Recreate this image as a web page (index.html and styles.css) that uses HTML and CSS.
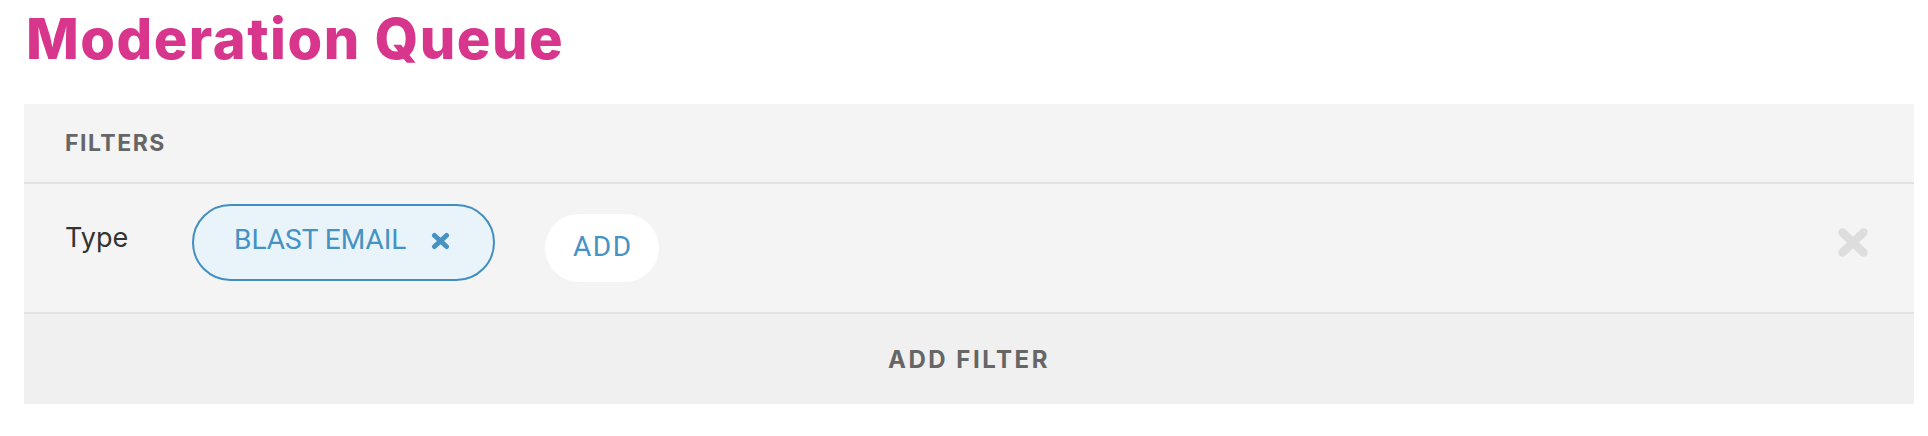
FILE: index.html
```html
<!DOCTYPE html>
<html lang="en">
<head>
<meta charset="utf-8">
<title>Moderation Queue</title>
<link rel="stylesheet" href="styles.css">
</head>
<body>
  <h1 class="page-title">Moderation Queue</h1>
  <section class="filters">
    <header class="filters-header">FILTERS</header>
    <div class="filter-row">
      <div class="filter-label">Type</div>
      <div class="chip">
        <span class="chip-text">BLAST EMAIL</span>
        <svg class="chip-x" viewBox="0 0 19 18" aria-hidden="true">
          <path d="M3.5 3.5 L15.5 14.5 M15.5 3.5 L3.5 14.5" stroke="currentColor" stroke-width="5" stroke-linecap="round" fill="none"/>
        </svg>
      </div>
      <button class="add-btn">ADD</button>
      <button class="remove-btn" aria-label="Remove filter">
        <svg viewBox="0 0 32 31" aria-hidden="true">
          <path d="M5.5 5.5 L26.5 25.5 M26.5 5.5 L5.5 25.5" stroke="currentColor" stroke-width="8.5" stroke-linecap="round" fill="none"/>
        </svg>
      </button>
    </div>
    <div class="add-filter">ADD FILTER</div>
  </section>
</body>
</html>
```

FILE: styles.css
```css
* { box-sizing: border-box; }

body {
  margin: 0;
  padding: 0 14px 0 24px;
  background: #ffffff;
  font-family: Inter, "Noto Sans", sans-serif;
}

.page-title {
  margin: 11px 0 37px 2px;
  font-family: Inter, sans-serif;
  font-weight: 800;
  font-size: 56px;
  line-height: 56px;
  letter-spacing: 1.5px;
  color: #d8358c;
}

.filters {
  display: flex;
  flex-direction: column;
}

.filters-header {
  height: 80px;
  padding-left: 41px;
  display: flex;
  align-items: center;
  background: #f4f4f4;
  border-bottom: 2px solid #e2e2e2;
  font-family: Inter, sans-serif;
  font-weight: 700;
  font-size: 23px;
  letter-spacing: 1.5px;
  color: #666666;
}

.filter-row {
  height: 130px;
  padding: 20px 45px 0 41px;
  display: flex;
  align-items: flex-start;
  background: #f4f4f4;
  border-bottom: 2px solid #e2e2e2;
}

.filter-label {
  flex: none;
  width: 127px;
  margin-top: 18px;
  font-family: Inter, sans-serif;
  font-size: 27px;
  line-height: 32px;
  color: #333333;
}

.chip {
  flex: none;
  height: 77px;
  display: flex;
  align-items: center;
  gap: 25px;
  padding: 0 43px 0 40px;
  border: 2px solid #418fc1;
  border-radius: 40px;
  background: #e9f4fa;
  color: #4592c3;
}

.chip-text {
  font-family: Roboto, sans-serif;
  font-size: 28px;
  line-height: 28px;
  padding-bottom: 5px;
}

.chip-x {
  width: 19px;
  height: 18px;
  margin-bottom: 3px;
}

.add-btn {
  flex: none;
  margin: 10px 0 0 50px;
  width: 114px;
  height: 68px;
  border: none;
  border-radius: 34px;
  background: #ffffff;
  color: #4592c3;
  font-family: Roboto, sans-serif;
  font-size: 28px;
  letter-spacing: 1.5px;
  padding: 0 0 4px 1px;
}

.remove-btn {
  flex: none;
  margin: 23px 0 0 auto;
  padding: 0;
  width: 32px;
  height: 31px;
  border: none;
  background: none;
  color: #dddddd;
}

.remove-btn svg {
  display: block;
  width: 32px;
  height: 31px;
}

.add-filter {
  height: 90px;
  display: flex;
  align-items: center;
  justify-content: center;
  background: #f0f0f0;
  font-family: Inter, sans-serif;
  font-weight: 700;
  font-size: 24px;
  letter-spacing: 2.5px;
  color: #666666;
}
```
